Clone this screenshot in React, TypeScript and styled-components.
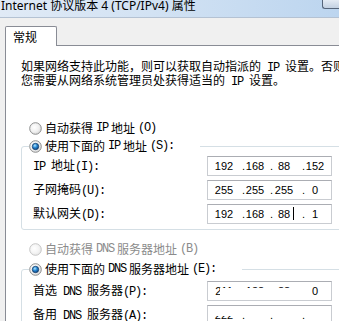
import React, { useId } from "react";
import styled, { createGlobalStyle } from "styled-components";

const Global = createGlobalStyle`
  html, body { margin: 0; padding: 0; background: #f0f0f0; }
  body { font-family: "Noto Sans CJK SC", "Noto Sans", sans-serif; }
`;

const Window = styled.div`
  width: 339px;
  height: 321px;
  overflow: hidden;
  background: #f0f0f0;
  display: flex;
  flex-direction: column;
`;

const TitleBar = styled.div`
  height: 17px;
  flex-shrink: 0;
  display: flex;
  align-items: flex-start;
  border-bottom: 1px solid #b4c2d3;
  background: linear-gradient(to right, #e0eaf6 0%, #d2e2f3 45%, #bcd5ef 100%);
`;

const TitleText = styled.div`
  flex: 1;
  padding-left: 1px;
  font-family: "Noto Sans", "Noto Sans CJK SC", sans-serif;
  font-size: 12px;
  line-height: 12px;
  color: #000;
  white-space: nowrap;
  overflow: hidden;
`;

const CaptionButton = styled.div`
  width: 16px;
  height: 8px;
  flex-shrink: 0;
  border: 1px solid #56657a;
  border-top: none;
  border-right: none;
  border-bottom-left-radius: 3px;
  background: linear-gradient(#e4ebf4, #c3d1e2);
`;

const Body = styled.div`
  flex: 1;
  display: flex;
  flex-direction: column;
  padding: 8px 0 0 5px;
  min-height: 0;
`;

const TabStrip = styled.div`
  display: flex;
  position: relative;
  z-index: 1;
  margin-bottom: -1px;
`;

const Tab = styled.div`
  box-sizing: border-box;
  width: 52px;
  height: 20px;
  padding-left: 7px;
  border: 1px solid #898c95;
  border-bottom: none;
  border-radius: 2px 2px 0 0;
  background: #fff;
  font-size: 12px;
  line-height: 19px;
  color: #000;
`;

const Panel = styled.div`
  flex: 1;
  display: flex;
  flex-direction: column;
  align-items: flex-start;
  padding: 14px 0 0 15px;
  border-top: 1px solid #898c95;
  border-left: 1px solid #898c95;
  background: #fff;
`;

const Intro = styled.div`
  font-size: 12px;
  line-height: 12px;
  color: #000;
  white-space: nowrap;
`;

const Half = styled.span`
  font-family: "Liberation Mono", monospace;
  letter-spacing: -1.2px;
`;

function Mixed({ text }: { text: string }) {
  const parts = text.split(/([\x20-\x7e]+)/);
  return (
    <>
      {parts.map((p, i) =>
        p === "" ? null : /[\x20-\x7e]/.test(p) ? (
          <Half key={i}>{p}</Half>
        ) : (
          <React.Fragment key={i}>{p}</React.Fragment>
        )
      )}
    </>
  );
}

const RadioRow = styled.div<{ $disabled?: boolean; $top?: number; $indent?: number }>`
  display: flex;
  align-items: center;
  gap: 3px;
  height: 14px;
  margin-top: ${(p) => p.$top ?? 0}px;
  margin-left: ${(p) => p.$indent ?? 0}px;
  font-size: 12px;
  line-height: 14px;
  white-space: nowrap;
  color: ${(p) => (p.$disabled ? "#8b8b8b" : "#000")};
`;

const RadioSvg = styled.svg`
  display: block;
  flex-shrink: 0;
`;

function Radio({ checked, disabled }: { checked?: boolean; disabled?: boolean }) {
  const id = useId().replace(/:/g, "");
  return (
    <RadioSvg width="13" height="13" viewBox="0 0 13 13">
      <defs>
        <radialGradient id={`${id}f`} cx="0.4" cy="0.4" r="0.7">
          <stop offset="0" stopColor="#ffffff" />
          <stop offset="0.55" stopColor={disabled ? "#f4f4f4" : "#f0f0f0"} />
          <stop offset="1" stopColor={disabled ? "#e4e4e4" : "#cfcfcf"} />
        </radialGradient>
        <radialGradient id={`${id}d`} cx="0.4" cy="0.35" r="0.7">
          <stop offset="0" stopColor="#b4e8ff" />
          <stop offset="0.45" stopColor="#2a8bd6" />
          <stop offset="1" stopColor="#0a3c76" />
        </radialGradient>
      </defs>
      <circle
        cx="6.5"
        cy="6.5"
        r="5.8"
        fill={`url(#${id}f)`}
        stroke={disabled ? "#c6c6c6" : "#8e8f8f"}
        strokeWidth="1"
      />
      {checked && (
        <circle cx="6.5" cy="6.5" r="3.2" fill={`url(#${id}d)`} stroke="#173f6c" strokeWidth="0.8" />
      )}
    </RadioSvg>
  );
}

const Group = styled.fieldset<{ $top: number }>`
  box-sizing: border-box;
  width: 340px;
  min-width: 0;
  margin: ${(p) => p.$top}px 0 0 0;
  padding: 0 0 5px 7px;
  border: 1px solid #d5dfe5;
  border-radius: 3px;
`;

const GroupLegend = styled.legend<{ $w: number }>`
  padding: 0;
  width: ${(p) => p.$w}px;
  height: 14px;
`;

const FieldGrid = styled.div<{ $top: number }>`
  display: grid;
  grid-template-columns: 174px 125px;
  grid-auto-rows: 20px;
  row-gap: 4px;
  align-items: center;
  margin: ${(p) => p.$top}px 0 0 4px;
`;

const FieldLabel = styled.div`
  font-size: 12px;
  line-height: 14px;
  color: #000;
  white-space: nowrap;
`;

const IpBox = styled.div`
  position: relative;
  box-sizing: border-box;
  width: 125px;
  height: 20px;
  padding-left: 3px;
  display: grid;
  grid-template-columns: 26px 8px 20px 8px 22px 10px 20px;
  align-items: center;
  background: #fff;
  border: 1px solid #c9ccd1;
  border-top-color: #abadb3;
  font-family: "Liberation Sans", Arial, sans-serif;
  font-size: 11px;
  line-height: 18px;
  color: #000;
`;

const Octet = styled.span`
  text-align: center;
  white-space: nowrap;
`;

const Dot = styled.span`
  text-align: right;
`;

const Caret = styled.span<{ $left: number }>`
  position: absolute;
  left: ${(p) => p.$left}px;
  top: 2px;
  width: 1px;
  height: 13px;
  background: #000;
`;

const Redact = styled.span<{ $l: number; $t: number; $w: number; $h: number }>`
  position: absolute;
  left: ${(p) => p.$l}px;
  top: ${(p) => p.$t}px;
  width: ${(p) => p.$w}px;
  height: ${(p) => p.$h}px;
  background: #fff;
`;

type Cover = { l: number; t: number; w: number; h: number };

function IpInput({
  octets,
  caret,
  covers = [],
}: {
  octets: string[];
  caret?: number;
  covers?: Cover[];
}) {
  return (
    <IpBox>
      <Octet>{octets[0]}</Octet>
      <Dot>.</Dot>
      <Octet>{octets[1]}</Octet>
      <Dot>.</Dot>
      <Octet>{octets[2]}</Octet>
      <Dot>.</Dot>
      <Octet>{octets[3]}</Octet>
      {caret !== undefined && <Caret $left={caret} />}
      {covers.map((c, i) => (
        <Redact key={i} $l={c.l} $t={c.t} $w={c.w} $h={c.h} />
      ))}
    </IpBox>
  );
}

export default function App() {
  return (
    <>
      <Global />
      <Window>
        <TitleBar>
          <TitleText>Internet 协议版本 4 (TCP/IPv4) 属性</TitleText>
          <CaptionButton />
        </TitleBar>
        <Body>
          <TabStrip>
            <Tab>常规</Tab>
          </TabStrip>
          <Panel>
            <Intro>
              <Mixed text="如果网络支持此功能，则可以获取自动指派的 IP 设置。否则，" />
              <br />
              <Mixed text="您需要从网络系统管理员处获得适当的 IP 设置。" />
            </Intro>

            <RadioRow $top={33} $indent={8}>
              <Radio />
              <Mixed text="自动获得 IP 地址(O)" />
            </RadioRow>

            <Group $top={4}>
              <GroupLegend $w={171}>
                <RadioRow>
                  <Radio checked />
                  <Mixed text="使用下面的 IP 地址(S):" />
                </RadioRow>
              </GroupLegend>
              <FieldGrid $top={3}>
                <FieldLabel>
                  <Mixed text="IP 地址(I):" />
                </FieldLabel>
                <IpInput octets={["192", "168", "88", "152"]} />
                <FieldLabel>
                  <Mixed text="子网掩码(U):" />
                </FieldLabel>
                <IpInput octets={["255", "255", "255", "0"]} />
                <FieldLabel>
                  <Mixed text="默认网关(D):" />
                </FieldLabel>
                <IpInput octets={["192", "168", "88", "1"]} caret={85} />
              </FieldGrid>
            </Group>

            <RadioRow $top={12} $indent={8} $disabled>
              <Radio disabled />
              <Mixed text="自动获得 DNS 服务器地址(B)" />
            </RadioRow>

            <Group $top={6}>
              <GroupLegend $w={213}>
                <RadioRow>
                  <Radio checked />
                  <Mixed text="使用下面的 DNS 服务器地址(E):" />
                </RadioRow>
              </GroupLegend>
              <FieldGrid $top={5}>
                <FieldLabel>
                  <Mixed text="首选 DNS 服务器(P):" />
                </FieldLabel>
                <IpInput
                  octets={["211", "138", "88", "0"]}
                  covers={[{ l: 12, t: 6, w: 90, h: 12 }]}
                />
                <FieldLabel>
                  <Mixed text="备用 DNS 服务器(A):" />
                </FieldLabel>
                <IpInput
                  octets={["222", "", "", ""]}
                  covers={[{ l: 3, t: 0, w: 26, h: 10 }]}
                />
              </FieldGrid>
            </Group>
          </Panel>
        </Body>
      </Window>
    </>
  );
}
